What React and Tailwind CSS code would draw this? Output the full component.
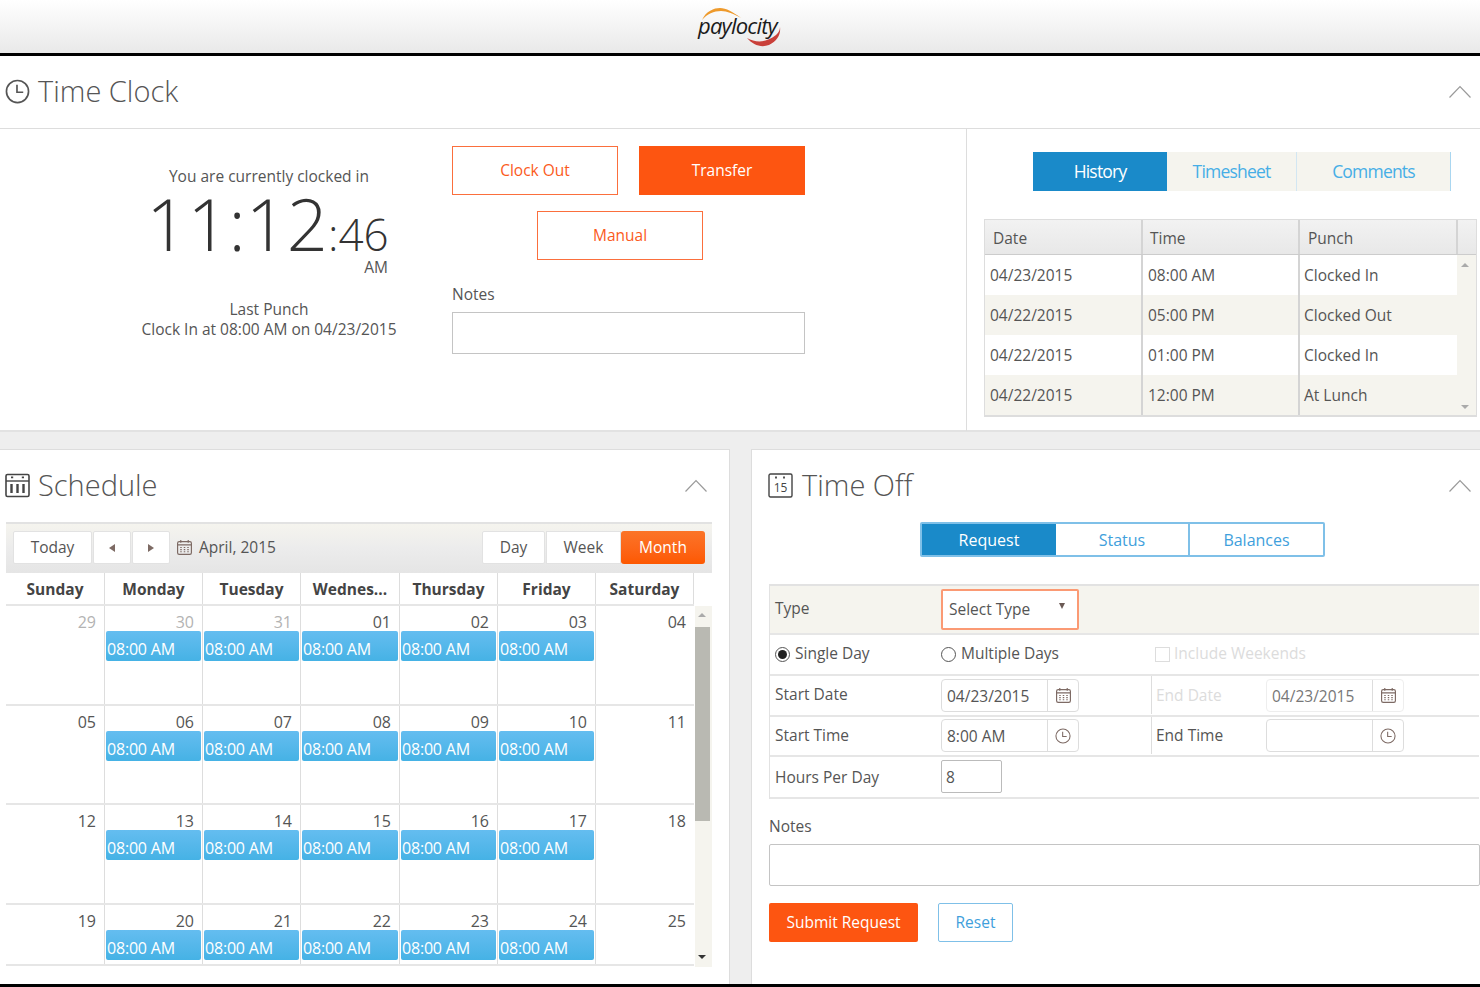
import React from 'react'

const historyRows = [
  ['04/23/2015', '08:00 AM', 'Clocked In'],
  ['04/22/2015', '05:00 PM', 'Clocked Out'],
  ['04/22/2015', '01:00 PM', 'Clocked In'],
  ['04/22/2015', '12:00 PM', 'At Lunch'],
]

const weekDays = ['Sunday', 'Monday', 'Tuesday', 'Wednes...', 'Thursday', 'Friday', 'Saturday']

const weeks = [
  { height: 'h-[100px]', days: ['29', '30', '31', '01', '02', '03', '04'], muted: 3 },
  { height: 'h-[99px]', days: ['05', '06', '07', '08', '09', '10', '11'], muted: 0 },
  { height: 'h-[100px]', days: ['12', '13', '14', '15', '16', '17', '18'], muted: 0 },
  { height: 'h-[61px]', days: ['19', '20', '21', '22', '23', '24', '25'], muted: 0 },
]

const ClockIcon = ({ className }) => (
  <svg viewBox="0 0 24 24" fill="none" stroke="currentColor" strokeWidth="1.6" className={className}>
    <circle cx="12" cy="12" r="10.6" />
    <path d="M11.5 5.5v7.2h6" />
  </svg>
)

const CalendarSmall = ({ className }) => (
  <svg viewBox="0 0 16 16" fill="none" stroke="currentColor" strokeWidth="1.1" className={className}>
    <rect x="1.5" y="2.5" width="13" height="12" rx="1.5" />
    <path d="M4.5 1v2.5M11.5 1v2.5M1.5 5.5h13" />
    <path d="M4 8h1.4M7.3 8h1.4M10.6 8H12M4 10h1.4M7.3 10h1.4M10.6 10H12M4 12h1.4M7.3 12h1.4M10.6 12H12" />
  </svg>
)

const ScheduleIcon = () => (
  <svg viewBox="0 0 25 25" fill="none" stroke="#444" className="w-[25px] h-[25px]">
    <rect x="1" y="1.5" width="23" height="22" rx="1.5" strokeWidth="1.6" />
    <path d="M1 8h23" strokeWidth="1.4" />
    <path d="M6 4.4h2.2M16.8 4.4H19" strokeWidth="1.8" />
    <path d="M6.5 11v9M12.5 11v9M18.5 11v9" strokeWidth="2.4" />
  </svg>
)

const TimeOffIcon = () => (
  <svg viewBox="0 0 25 25" fill="none" stroke="#444" className="w-[25px] h-[25px]">
    <rect x="1" y="1" width="23" height="23" rx="1.5" strokeWidth="1.4" />
    <path d="M8 3.5v2M16 3.5v2" strokeWidth="1.8" />
    <text x="12.5" y="19" textAnchor="middle" fontSize="12" fontFamily="Open Sans, sans-serif" fill="#444" stroke="none">15</text>
  </svg>
)

const Chevron = () => (
  <svg viewBox="0 0 22 13" fill="none" stroke="#9a9a9a" strokeWidth="1.2" className="w-[22px] h-[13px]">
    <path d="M0.5 12.5L11 1.5l10.5 11" />
  </svg>
)

const Logo = () => (
  <div className="relative w-[86px] h-[40px]">
    <svg viewBox="0 0 86 40" fill="none" className="absolute inset-0 w-full h-full">
      <path d="M5 13C9 4 17 1 23 1c6 0 13 4 21 10-7-4-14-7-20-7C17 4 10 7 5 13z" fill="#ee9a2c" />
      <path d="M50 31c9 5 19 5 29-3 3-3 4-5 4-8 1 8-3 14-11 18-8 3-16 0-22-7z" fill="#c9403a" />
    </svg>
    <span className="absolute left-[1px] top-[4px] text-[22px] leading-[28px] italic text-[#1b1b1b] tracking-[-0.8px] font-['Open_Sans',sans-serif]">
      paylocity
    </span>
  </div>
)

const SectionHeader = ({ icon, title, gap = 'gap-[8px]', pr = 'pr-[9px]', pl = 'pl-[5px]' }) => (
  <div className={`flex items-center justify-between h-[72px] pb-[2px] ${pr} ${pl}`}>
    <div className={`flex items-center ${gap}`}>
      {icon}
      <span className="text-[29px] font-light text-[#555]">{title}</span>
    </div>
    <Chevron />
  </div>
)

const TimeClock = () => (
  <section className="h-[376px] bg-white border-b-2 border-[#e2e2e2]">
    <div className="border-b border-[#ddd]">
      <SectionHeader icon={<ClockIcon className="w-[25px] h-[25px] text-[#555]" />} title="Time Clock" />
    </div>
    <div className="flex h-[302px]">
      <div className="flex w-[967px] border-r border-[#ddd]">
        <div className="w-[452px] pl-[86px] pt-[36px] text-center text-[#555] text-[15.5px]">
          <div className="leading-[22px]">You are currently clocked in</div>
          <div className="flex items-baseline justify-center h-[72px] pr-[3px] text-[#333] font-light">
            <span className="text-[72px] leading-[72px]">11:12</span>
            <span className="text-[44px] leading-[72px]">:46</span>
          </div>
          <div className="text-right pr-[64px] leading-[20px] -mt-[2px]">AM</div>
          <div className="mt-[22px] leading-[20px]">Last Punch</div>
          <div className="leading-[20px]">Clock In at 08:00 AM on 04/23/2015</div>
        </div>
        <div className="w-[353px] pt-[17px]">
          <div className="flex justify-between">
            <button className="w-[166px] h-[49px] border border-[#fb6f3d] text-[#fb5a1c] text-[15.5px] bg-white">Clock Out</button>
            <button className="w-[166px] h-[49px] bg-[#fd5511] text-white text-[15.5px]">Transfer</button>
          </div>
          <button className="block w-[166px] h-[49px] mt-[16px] ml-[85px] border border-[#fb6f3d] text-[#fb5a1c] text-[15.5px] bg-white">Manual</button>
          <div className="mt-[23px] text-[15.5px] leading-[22px] text-[#555]">Notes</div>
          <div className="mt-[7px] h-[42px] border border-[#c4c4c4] bg-white" />
        </div>
      </div>
      <div className="flex-1 pt-[23px]">
        <div className="flex ml-[66px] w-[418px] h-[39px] text-[17.5px] tracking-[-0.8px] text-[#46aee6] bg-[#f5f4ee] border-r border-[#a9d6f0]">
          <div className="flex items-center justify-center w-[134px] bg-[#1a8ac9] text-white">History</div>
          <div className="flex items-center justify-center w-[130px] border-r border-[#d2e6f2]">Timesheet</div>
          <div className="flex items-center justify-center flex-1">Comments</div>
        </div>
        <div className="mt-[28px] ml-[17px] w-[493px] border border-[#ddd] border-b-2 bg-[#f5f4ee] text-[15.5px] text-[#555]">
          <div className="flex h-[35px] border-b border-[#ccc] bg-gradient-to-b from-[#f2f2f2] to-[#e8e8e8]">
            <div className="w-[158px] pl-[8px] pt-[7px] border-r-2 border-[#d4d4d4]">Date</div>
            <div className="w-[157px] pl-[7px] pt-[7px] border-r-2 border-[#d4d4d4]">Time</div>
            <div className="w-[158px] pl-[8px] pt-[7px] border-r-2 border-[#d4d4d4]">Punch</div>
          </div>
          <div className="relative">
            {historyRows.map((row, i) => (
              <div key={row[0] + row[1]} className="flex h-[40px] leading-[41px]">
                <div className={`w-[158px] pl-[5px] border-r-2 border-[#d4d4d4] ${i % 2 === 0 ? 'bg-white' : ''}`}>{row[0]}</div>
                <div className={`w-[157px] pl-[5px] border-r-2 border-[#d4d4d4] ${i % 2 === 0 ? 'bg-white' : ''}`}>{row[1]}</div>
                <div className={`w-[157px] pl-[4px] ${i % 2 === 0 ? 'bg-white' : ''}`}>{row[2]}</div>
              </div>
            ))}
            <div className="absolute right-[7px] top-[8px] border-x-[4px] border-x-transparent border-b-[4px] border-b-[#aaa]" />
            <div className="absolute right-[7px] bottom-[6px] border-x-[4px] border-x-transparent border-t-[4px] border-t-[#aaa]" />
          </div>
        </div>
      </div>
    </div>
  </section>
)

const Schedule = () => (
  <section className="w-[731px] bg-white border-t border-r border-[#ddd]">
    <SectionHeader icon={<ScheduleIcon />} title="Schedule" pr="pr-[22px]" />
    <div className="ml-[6px] mr-[17px] border-t-2 border-[#e2e2e2] text-[#555]">
      <div className="flex items-center h-[49px] pl-[7px] pr-[7px] pb-[2px] bg-gradient-to-b from-[#f5f4ee] via-[#ececec] to-[#e5e5e5] text-[15.5px]">
        <div className="flex items-center justify-center w-[79px] h-[33px] bg-white border border-[#e2e2e2] rounded-[2px]">Today</div>
        <div className="flex items-center justify-center w-[38px] h-[33px] ml-[1px] bg-white border border-[#e2e2e2] rounded-[2px]">
          <div className="border-y-[4px] border-y-transparent border-r-[6px] border-r-[#7d6a64]" />
        </div>
        <div className="flex items-center justify-center w-[38px] h-[33px] ml-[1px] bg-white border border-[#e2e2e2] rounded-[2px]">
          <div className="border-y-[4px] border-y-transparent border-l-[6px] border-l-[#7d6a64]" />
        </div>
        <CalendarSmall className="w-[17px] h-[17px] ml-[6px] text-[#7d6a64]" />
        <span className="ml-[6px] flex-1">April, 2015</span>
        <div className="flex items-center justify-center w-[63px] h-[33px] bg-white border border-[#e2e2e2] rounded-[2px]">Day</div>
        <div className="flex items-center justify-center w-[75px] h-[33px] ml-[1px] bg-white border border-[#e2e2e2]">Week</div>
        <div className="flex items-center justify-center w-[84px] h-[33px] rounded-[3px] text-white bg-gradient-to-b from-[#fb7427] to-[#fd5800]">Month</div>
      </div>
      <div className="flex">
        <div className="w-[688px]">
          <div className="grid grid-cols-[99px_98px_98px_99px_98px_98px_98px] h-[33px] border-b-2 border-[#e6e6e6]">
            {weekDays.map((d) => (
              <div key={d} className="flex items-center justify-center pt-[2px] font-bold text-[15.5px] text-[#444] border-r border-[#ddd]">{d}</div>
            ))}
          </div>
          {weeks.map((week) => (
            <div key={week.days[0]} className={`grid grid-cols-[99px_98px_98px_99px_98px_98px_98px] border-b-2 border-[#e6e6e6] ${week.height}`}>
              {week.days.map((d, i) => (
                <div key={d} className="border-r border-[#ddd] last:border-r-0 overflow-hidden">
                  <div className={`pr-[8px] pt-[6px] h-[25px] leading-[20px] text-right text-[16px] ${i < week.muted ? 'text-[#b3b3b3]' : 'text-[#555]'}`}>{d}</div>
                  {i >= 1 && i <= 5 && (
                    <div className="ml-[1px] mr-[1px] h-[30px] rounded-[2px] pl-[1px] leading-[36px] text-[16px] tracking-[-0.2px] text-white bg-gradient-to-b from-[#64bdf0] to-[#45b2e5]">08:00 AM</div>
                  )}
                </div>
              ))}
            </div>
          ))}
        </div>
        <div className="relative flex-1 bg-white">
          <div className="h-[33px]" />
          <div className="relative h-[361px] bg-[#f5f4ee] ml-[1px]">
            <div className="absolute left-0 w-[15px] top-[21px] h-[194px] bg-[#b9b9b2]" />
            <div className="absolute left-[3px] top-[7px] border-x-[4px] border-x-transparent border-b-[4px] border-b-[#aaa]" />
            <div className="absolute left-[3px] bottom-[8px] border-x-[4px] border-x-transparent border-t-[4px] border-t-[#333]" />
          </div>
        </div>
      </div>
    </div>
  </section>
)

const FormRow = ({ className = '', children }) => (
  <div className={`flex items-center pl-[5px] pb-[1px] border-b-2 border-[#e6e6e6] text-[15.5px] text-[#555] ${className}`}>{children}</div>
)

const InputAddon = ({ value, icon, faded }) => (
  <div className={`flex w-[138px] h-[33px] bg-white border rounded-[4px] ${faded ? 'border-[#eee] text-[#777]' : 'border-[#ddd]'}`}>
    <div className="flex-1 pl-[5px] leading-[32px] border-r border-[#ddd]">{value}</div>
    <div className="flex items-center justify-center w-[30px] text-[#7d6a64]">{icon}</div>
  </div>
)

const TimeOff = () => (
  <section className="flex-1 bg-white border-t border-l border-[#ddd]">
    <SectionHeader icon={<TimeOffIcon />} title="Time Off" pl="pl-[16px]" gap="gap-[9px]" />
    <div className="flex ml-[168px] w-[405px] h-[35px] border-2 border-[#7fc0e8] rounded-[2px] text-[16px] text-[#3f9fdc]">
      <div className="flex items-center justify-center w-[134px] bg-[#1a8ac9] text-white">Request</div>
      <div className="flex items-center justify-center w-[134px] border-r-2 border-[#7fc0e8]">Status</div>
      <div className="flex items-center justify-center flex-1">Balances</div>
    </div>
    <div className="ml-[17px] mt-[27px] w-[710px] border-t-2 border-l border-[#e2e2e2]">
      <FormRow className="h-[49px] bg-[#f5f4ee]">
        <div className="w-[166px]">Type</div>
        <div className="relative w-[138px] h-[41px] pl-[6px] leading-[37px] bg-white border-2 border-[#fb9a74] rounded-[2px]">
          Select Type
          <div className="absolute right-[12px] top-[12px] border-x-[3.5px] border-x-transparent border-t-[6px] border-t-[#6b5a55]" />
        </div>
      </FormRow>
      <FormRow className="h-[41px]">
        <div className="flex items-center gap-[5px] w-[166px]">
          <div className="flex items-center justify-center w-[15px] h-[15px] rounded-full border border-[#555]">
            <div className="w-[9px] h-[9px] rounded-full bg-[#222]" />
          </div>
          Single Day
        </div>
        <div className="flex items-center gap-[5px] w-[214px]">
          <div className="w-[15px] h-[15px] rounded-full border border-[#555]" />
          Multiple Days
        </div>
        <div className="flex items-center gap-[4px] text-[#dcdcdc]">
          <div className="w-[15px] h-[15px] border border-[#ddd]" />
          Include Weekends
        </div>
      </FormRow>
      <FormRow className="h-[41px]">
        <div className="w-[166px]">Start Date</div>
        <InputAddon value="04/23/2015" icon={<CalendarSmall className="w-[17px] h-[17px]" />} />
        <div className="self-stretch ml-[72px] w-[115px] pl-[4px] leading-[38px] border-l border-[#ddd] text-[#dcdcdc]">End Date</div>
        <InputAddon faded value="04/23/2015" icon={<CalendarSmall className="w-[17px] h-[17px]" />} />
      </FormRow>
      <FormRow className="h-[40px]">
        <div className="w-[166px]">Start Time</div>
        <InputAddon value="8:00 AM" icon={<ClockIcon className="w-[16px] h-[16px]" />} />
        <div className="self-stretch ml-[72px] w-[115px] pl-[4px] leading-[37px] border-l border-[#ddd]">End Time</div>
        <InputAddon value="" icon={<ClockIcon className="w-[16px] h-[16px]" />} />
      </FormRow>
      <FormRow className="h-[42px]">
        <div className="w-[166px] pt-[2px]">Hours Per Day</div>
        <div className="w-[61px] h-[33px] pl-[4px] leading-[32px] bg-white border border-[#bbb] rounded-[2px]">8</div>
      </FormRow>
    </div>
    <div className="ml-[17px] mt-[16px] text-[15.5px] leading-[22px] text-[#555]">Notes</div>
    <div className="ml-[17px] mt-[7px] w-[711px] h-[42px] border border-[#c4c4c4] rounded-[2px]" />
    <div className="flex ml-[17px] mt-[17px] gap-[20px] text-[15.5px]">
      <button className="w-[149px] h-[39px] bg-[#fd5511] text-white rounded-[2px]">Submit Request</button>
      <button className="w-[75px] h-[39px] bg-white border border-[#7fc0e8] text-[#3f9fdc] rounded-[2px]">Reset</button>
    </div>
  </section>
)

export default function App() {
  return (
    <div className="flex flex-col h-[987px] overflow-hidden bg-[#eeeeee] font-['Open_Sans',sans-serif]">
      <header className="flex justify-center items-center shrink-0 h-[53px] bg-gradient-to-b from-white to-[#e9e9e9]">
        <Logo />
      </header>
      <div className="shrink-0 h-[3px] bg-black" />
      <TimeClock />
      <div className="shrink-0 h-[17px]" />
      <div className="flex flex-1 gap-[21px]">
        <Schedule />
        <TimeOff />
      </div>
      <div className="shrink-0 h-[3px] bg-black" />
    </div>
  )
}
